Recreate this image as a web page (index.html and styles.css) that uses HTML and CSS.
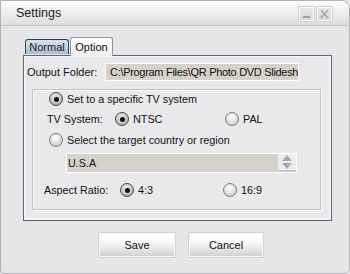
FILE: index.html
```html
<!DOCTYPE html>
<html>
<head>
<meta charset="utf-8">
<link rel="stylesheet" href="styles.css">
</head>
<body>
<div class="window">
  <div class="titlebar">
    <span class="title">Settings</span>
    <div class="tbtns">
      <span class="tbtn"><svg width="13" height="12" viewBox="0 0 13 12"><rect x="3" y="8" width="7" height="2" fill="#a0a0a0"/></svg></span>
      <span class="tbtn"><svg width="13" height="12" viewBox="0 0 13 12"><path d="M3 2 L10 10 M10 2 L3 10" stroke="#a0a0a0" stroke-width="1.3"/></svg></span>
    </div>
  </div>
  <div class="content">
    <div class="tabs">
      <div class="tab tab-normal">Normal</div>
      <div class="tab tab-option">Option</div>
    </div>
    <div class="panel">
      <div class="folder-row">
        <span class="folder-label">Output Folder:</span>
        <span class="textbox">C:\Program Files\QR Photo DVD Slidesh</span>
      </div>
      <div class="group">
        <div class="row r1">
          <span class="radio on"></span><span class="rtext">Set to a specific TV system</span>
        </div>
        <div class="row r2">
          <span class="lab lab-tv">TV System:</span>
          <span class="opt opt-ntsc"><span class="radio on"></span><span class="rtext">NTSC</span></span>
          <span class="opt"><span class="radio"></span><span class="rtext">PAL</span></span>
        </div>
        <div class="row r3">
          <span class="radio"></span><span class="rtext">Select the target country or region</span>
        </div>
        <div class="combo">
          <span class="combo-text">U.S.A</span>
          <span class="spin"><svg width="16" height="16" viewBox="0 0 16 16"><path d="M8 1 L13 7 H3 Z" fill="#a8a8a8"/><path d="M3 9 H13 L8 15 Z" fill="#a8a8a8"/></svg></span>
        </div>
        <div class="row r5">
          <span class="lab lab-ar">Aspect Ratio:</span>
          <span class="opt opt-43"><span class="radio on"></span><span class="rtext">4:3</span></span>
          <span class="opt"><span class="radio"></span><span class="rtext">16:9</span></span>
        </div>
      </div>
    </div>
    <div class="buttons">
      <button class="btn btn-save">Save</button>
      <button class="btn btn-cancel">Cancel</button>
    </div>
  </div>
</div>
</body>
</html>
```
FILE: styles.css
```css
* { box-sizing: border-box; }
html, body { margin: 0; padding: 0; background: #e7e7e9; }
body { font-family: "Liberation Sans", Arial, sans-serif; font-size: 10.8px; color: #111; }

.window {
  width: 350px; height: 274px;
  border: 1px solid #b2b2b6;
  border-radius: 0 9px 5px 4px;
  background: #e6e6e8;
  overflow: hidden;
}

.titlebar {
  height: 25px;
  display: flex;
  align-items: flex-start;
  background: linear-gradient(#fcfcfc 0%, #f0f0f0 40%, #dedede 100%);
  border-bottom: 1px solid #c4c4c6;
}
.title {
  font-size: 12.5px;
  color: #1a1a1a;
  margin: 5px 0 0 15px;
  line-height: 15px;
}
.tbtns { margin: 6px 17px 0 auto; display: flex; gap: 3px; }
.tbtn {
  width: 15px; height: 14px;
  border: 1px solid #fdfdfd;
  box-shadow: 0 0 0 1px #cfcfcf;
  background: linear-gradient(#e8e8e8, #d6d6d6);
  display: flex; align-items: center; justify-content: center;
}

.content { display: flex; flex-direction: column; }

.tabs {
  display: flex; align-items: flex-end;
  margin: 11px 0 0 24px;
  height: 18px;
  gap: 1px;
}
.tab {
  font-size: 11px;
  line-height: 13px;
  text-align: center;
  border-radius: 3px 3px 0 0;
}
.tab-normal {
  width: 44px; height: 15px;
  margin-bottom: 1px;
  border: 1px solid #34414e;
  border-bottom: none;
  background: linear-gradient(#d9e2ea, #aebdca);
  color: #0e1f33;
  padding-top: 1px;
}
.tab-option {
  width: 43px; height: 19px;
  margin-bottom: -1px;
  border: 1px solid #8e969e;
  border-bottom: none;
  background: linear-gradient(#ffffff, #eeeeee);
  position: relative; z-index: 1;
  padding-top: 3px;
  color: #111;
}

.panel {
  margin-left: 22px;
  width: 309px; height: 166px;
  border: 1px solid #5c6670;
  background: #e9e9eb;
  box-shadow: inset 1px 1px 0 #f7f7f7, inset -2px -2px 0 #f4f4f4;
  display: flex; flex-direction: column;
}

.folder-row { display: flex; align-items: center; margin-top: 7px; height: 18px; }
.folder-label { width: 81px; padding-left: 3px; font-size: 11px; }
.textbox {
  width: 194px; height: 18px;
  border: 1px solid #fdfdfd;
  background: #d6d2ca;
  padding-left: 4px;
  line-height: 16px;
  font-size: 11px;
  letter-spacing: -0.3px;
  white-space: nowrap; overflow: hidden;
  color: #111;
}

.group {
  margin: 8px 0 0 8px;
  width: 289px; height: 121px;
  border: 1px solid #c2c2c4;
  box-shadow: inset 1px 1px 0 #fbfbfb, 1px 1px 0 #fbfbfb;
  display: flex; flex-direction: column;
}
.row { display: flex; align-items: center; height: 14px; }
.r1 { margin-top: 2px; padding-left: 16px; }
.r2 { margin-top: 6px; padding-left: 14px; }
.r3 { margin-top: 7px; padding-left: 16px; }
.r5 { margin-top: 10px; padding-left: 11px; }
.lab-tv { width: 68px; }
.lab-ar { width: 76px; }
.opt { display: flex; align-items: center; }
.opt-ntsc { width: 110px; }
.opt-43 { width: 103px; }

.radio {
  width: 14px; height: 14px;
  border-radius: 50%;
  border: 1px solid #7b7b7b;
  background: radial-gradient(circle at 45% 35%, #ffffff 0%, #e4e4e4 45%, #b8b8b8 100%);
  flex: none;
  display: flex; align-items: center; justify-content: center;
}
.radio.on {
  border-color: #4a4a4a;
  background: radial-gradient(circle at 45% 35%, #f2f2f2 0%, #c9c9c9 50%, #8c8c8c 100%);
}
.radio.on::after {
  content: "";
  width: 5px; height: 5px; border-radius: 50%;
  background: #111;
  box-shadow: 0 0 0 1px #d8d8d8;
}
.rtext { margin-left: 4px; }

.combo {
  margin: 6px 0 0 33px;
  width: 231px; height: 20px;
  border: 1px solid #fdfdfd;
  background: #d6d2ca;
  display: flex; align-items: center;
}
.combo-text { flex: 1; padding-left: 1px; }
.spin {
  width: 18px; height: 18px;
  background: #ececec;
  border-bottom: 2px solid #c8c8c8;
  display: flex; align-items: center; justify-content: center;
}

.buttons { display: flex; margin: 12px 0 0 98px; gap: 14px; }
.btn {
  height: 24px;
  font-family: "Liberation Sans", Arial, sans-serif;
  font-size: 11px;
  color: #111;
  border: 1px solid #f6f6f6;
  box-shadow: 0 0 0 1px #d2d2d2;
  background: linear-gradient(#ffffff 0%, #f4f4f4 45%, #d2d2d2 100%);
  padding: 0;
}
.btn-save { width: 76px; }
.btn-cancel { width: 74px; }
```
